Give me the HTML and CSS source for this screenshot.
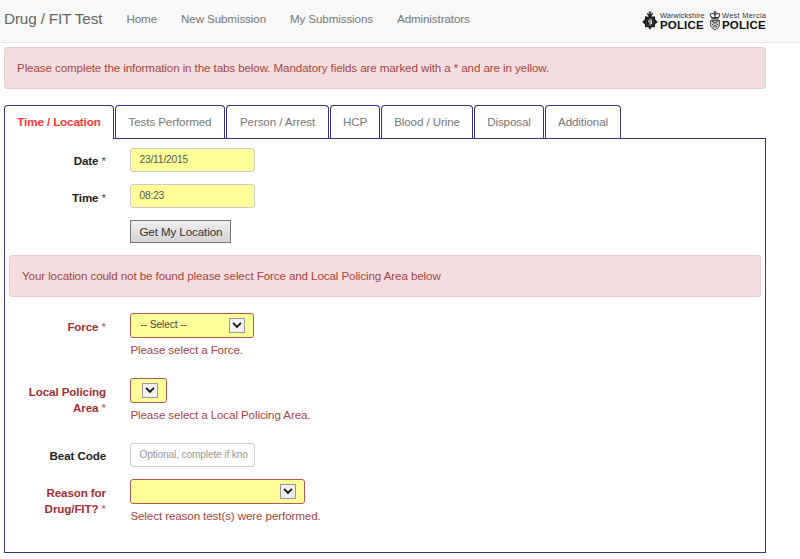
FILE: index.html
```html
<!DOCTYPE html>
<html lang="en">
<head>
<meta charset="utf-8">
<title>Drug / FIT Test</title>
<link rel="stylesheet" href="styles.css">
</head>
<body>
<header class="navbar">
  <a class="brand">Drug / FIT Test</a>
  <nav class="links"><a>Home</a><a>New Submission</a><a>My Submissions</a><a>Administrators</a></nav>
  <div class="logos">
    <div class="logo">
      <svg class="crest" width="16" height="20" viewBox="0 0 16 20">
        <path d="M8 0v4M6.5 1.2h3M5.3 2.4l1 2.300h3.400l1-2.300-1.600.8L8 2.200l-1.100 1z" fill="#222" stroke="#222" stroke-width=".8"/>
        <path d="M8 4l2 1.800 3-.5.1 2.900L15.800 11l-2.700 2.300-.1 3-3-.2L8 18.800l-2-2.700-3 .2-.1-3L.2 11l2.700-2.800L3 5.300l3 .5z" fill="#1c1c1c"/>
        <circle cx="8" cy="11" r="3.800" fill="#111" stroke="#777" stroke-width=".5"/>
        <path d="M9.300 8.800H7.400L6.600 11h2.700v2H6.900M9.400 8.800v4.200" fill="none" stroke="#eee" stroke-width="1"/>
      </svg>
      <div class="force"><span class="area">Warwickshire</span><b class="police">POLICE</b></div>
    </div>
    <div class="logo mercia">
      <svg class="crest" width="12" height="20" viewBox="0 0 12 20">
        <path d="M6 0v3M4.500 1.200h3M2.700 6.600C.3 4 1 2.500 2.700 2.500 4.500 2.400 6 3.400 6 5c0-1.600 1.500-2.600 3.300-2.500C11 2.500 11.700 4 9.300 6.600zM2.500 8h7M6 4v4" fill="none" stroke="#333" stroke-width="1.100"/>
        <path d="M1.500 9.500h9v4.200c0 2.200-2.200 4-4.500 5.300-2.300-1.300-4.500-3.100-4.500-5.300z" fill="#ccc" stroke="#555" stroke-width="1"/>
        <path d="M3 10l3 2 3-2M3 14l1.800-1.500M9 14l-1.800-1.500M4 16l2-1.500L8 16" fill="none" stroke="#333" stroke-width="1"/>
      </svg>
      <div class="force"><span class="area">West Mercia</span><b class="police">POLICE</b></div>
    </div>
  </div>
</header>
<main class="page">
  <div class="alert intro">Please complete the information in the tabs below. Mandatory fields are marked with a * and are in yellow.</div>
  <nav class="tabs">
    <a class="tab active">Time / Location</a><a class="tab">Tests Performed</a><a class="tab person">Person / Arrest</a><a class="tab hcp">HCP</a><a class="tab blood">Blood / Urine</a><a class="tab disposal">Disposal</a><a class="tab additional">Additional</a>
  </nav>
  <form class="panel">
    <div class="row date"><label>Date <i>*</i></label><div><input class="field required" value="23/11/2015"></div></div>
    <div class="row time"><label>Time <i>*</i></label><div><input class="field required" value="08:23"></div></div>
    <div class="row locate"><span></span><button type="button">Get My Location</button></div>
    <div class="alert warning">Your location could not be found please select Force and Local Policing Area below</div>
    <div class="row error select-row"><label>Force <i>*</i></label><div>
      <div class="select force-select"><span>-- Select --</span><svg class="arrow" width="16" height="15" viewBox="0 0 16 15"><path d="M3.500 4.500L8 9.200l4.500-4.700"/></svg></div>
      <p>Please select a Force.</p></div></div>
    <div class="row error select-row"><label>Local Policing<br>Area <i>*</i></label><div>
      <div class="select area-select"><span></span><svg class="arrow" width="16" height="15" viewBox="0 0 16 15"><path d="M3.500 4.500L8 9.200l4.500-4.700"/></svg></div>
      <p>Please select a Local Policing Area.</p></div></div>
    <div class="row beat"><label>Beat Code</label><div><input class="field" placeholder="Optional, complete if kno"></div></div>
    <div class="row error"><label>Reason for<br>Drug/FIT? <i>*</i></label><div>
      <div class="select reason-select"><span></span><svg class="arrow" width="16" height="15" viewBox="0 0 16 15"><path d="M3.500 4.500L8 9.200l4.500-4.700"/></svg></div>
      <p>Select reason test(s) were performed.</p></div></div>
  </form>
</main>
</body>
</html>
```
FILE: styles.css
```css
* { box-sizing: border-box; }
body { margin: 0; height: 559px; overflow: hidden; background: #fff; color: #333; font: 11.6px/16.3px "Liberation Sans", Arial, sans-serif; letter-spacing: -.1px; }
.navbar { display: flex; height: 43px; padding-left: 4px; background: #f8f8f8; border-bottom: 1px solid #e7e7e7; color: #777; }
.brand { width: 122.500px; padding-top: 11px; font-size: 15.400px; letter-spacing: -.2px; color: #666; white-space: nowrap; }
.links { display: flex; gap: 24px; padding-top: 11px; }
.logos { display: flex; margin-left: auto; margin-right: 34px; padding-top: 11px; }
.logo { display: flex; width: 67px; gap: 2px; }
.logo.mercia { width: 57px; gap: 1px; }
.crest { flex: none; }
.force { display: flex; flex-direction: column; padding-top: 1px; color: #111; white-space: nowrap; }
.area { font-size: 7.400px; line-height: 8px; letter-spacing: .08px; color: #333; }
.mercia .area { letter-spacing: .3px; }
.police { font-size: 11.500px; line-height: 11px; letter-spacing: .15px; }
.page { width: 762px; margin-left: 4px; padding-top: 4px; }
.alert { height: 42px; padding: 12px; border: 1px solid #ebccd1; border-radius: 3px; background: #f2dede; color: #a94442; }
.tabs { display: flex; gap: 1px; height: 34px; margin-top: 16px; position: relative; }
.tab { width: 110px; height: 33px; padding-top: 8px; border: 1px solid #37328b; border-bottom: 0; border-radius: 4px 4px 0 0; background: #fff; text-align: center; color: #777; white-space: nowrap; }
.tab.active { height: 34px; color: #f33; font-weight: bold; }
.tab.person { width: 103px; }
.tab.hcp { width: 50px; }
.tab.blood { width: 92px; }
.tab.disposal { width: 70px; }
.tab.additional { width: 76px; }
.panel { height: 415px; margin-top: -1px; padding: 9px 4px 0; border: 1px solid #37328b; }
.row { display: grid; grid-template-columns: 97px 1fr; column-gap: 24.400px; }
.row label { padding-top: 5px; text-align: right; font-weight: bold; color: #222; }
.row i { font-style: normal; font-weight: normal; opacity: .8; }
.row.date, .row.time { height: 36px; }
.row.time label { padding-top: 6px; }
.locate { height: 35px; }
.locate button { width: 101px; height: 23px; padding: 1px 0 0; border: 1px solid #777; background: linear-gradient(#eee, #d5d5d5); color: #333; font: inherit; letter-spacing: -.1px; }
.field { display: block; width: 125px; height: 24px; padding: 0 5px 1px 8px; border: 1px solid #ccc; border-radius: 3px; background: #fff; color: #555; font: 10.200px "Liberation Sans", Arial, sans-serif; letter-spacing: -.15px; }
.field::placeholder { color: #999; opacity: 1; }
.field.required { background: #ff9; }
.warning { margin-bottom: 16px; }
.row.error { color: #a94442; }
.row.error label { padding-top: 6px; color: #a12f32; }
.select-row { height: 65px; }
.select { display: flex; align-items: center; justify-content: space-between; height: 25px; padding: 0 8px 0 9px; border: 1px solid #b55a50; border-radius: 3px; background: #ff9; color: #444; font-size: 10.200px; letter-spacing: -.1px; }
.force-select { width: 124px; }
.area-select { width: 37px; }
.reason-select { width: 175px; }
.arrow { flex: none; border: 1px solid #999; background: #f1f1f1; }
.arrow path { fill: none; stroke: #111; stroke-width: 2; }
.row p { margin: 4px 0 0; }
.row.beat { height: 36px; }
```
